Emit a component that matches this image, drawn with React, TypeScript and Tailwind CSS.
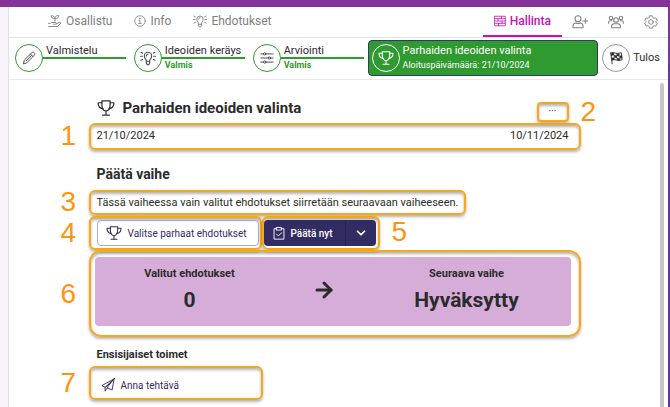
import type { ReactNode } from "react";
import { ArrowRight, ChevronDown } from "lucide-react";

type IconProps = { className?: string };

function Svg({ className, children }: IconProps & { children: ReactNode }) {
  return (
    <svg
      viewBox="0 0 24 24"
      fill="none"
      stroke="currentColor"
      strokeWidth="1.6"
      strokeLinecap="round"
      strokeLinejoin="round"
      aria-hidden="true"
      className={className}
    >
      {children}
    </svg>
  );
}

const Trophy = ({ className }: IconProps) => (
  <Svg className={className}>
    <path d="M6.5 2.5h11v5c0 5-2 8-5.500 8.500C8.500 15.500 6.500 12.500 6.500 7.500z" />
    <path d="M6.500 5H1.500c0 4.500 2.500 7.500 6.500 7.800M17.500 5h5c0 4.500-2.500 7.500-6.500 7.800" />
    <path d="M12 16v5.500M7.500 21.500h9" />
  </Svg>
);

const Bulb = ({ className }: IconProps) => (
  <Svg className={className}>
    <path d="M9.500 17c0-3-3-4-3-8a5.500 5.500 0 0 1 11 0c0 4-3 5-3 8zM9.500 17v3l1.500 2h2l1.500-2v-3M9.500 9c0-1.600 1-2.500 2.500-2.500" />
    <path d="M.8 9.500h2.700M20.500 9.500h2.700M1.500 3.500l2.500 1.300M22.500 3.500L20 4.800M1.500 15.500L4 14.200M22.500 15.500L20 14.200" />
  </Svg>
);

const Info = ({ className }: IconProps) => (
  <Svg className={className}>
    <circle cx="12" cy="12" r="10.500" />
    <path d="M10 10.500h2v6.500M9.500 17h5" />
    <circle cx="11.800" cy="7" r="0.800" fill="currentColor" />
  </Svg>
);

const HandPlant = ({ className }: IconProps) => (
  <Svg className={className}>
    <path d="M12 12.500V7.500C12 4.500 9.500 3 5.500 3c0 3.500 2.500 5 6.500 5M12 8c4 0 6.500-1.500 6.500-5.500-3.500 0-5.500 1-6.300 3" />
    <path d="M1 16h3l2-1.500h6.500c2.500 0 2.500 3 0 3H9.500M14.500 17l5-2.700c2-1 3.300 1 1.800 2.400L16 21.500H1" />
  </Svg>
);

const Board = ({ className }: IconProps) => (
  <Svg className={className}>
    <path d="M1.500 2.500h21v19h-21zM1.500 7.300h21M1.500 12h21M1.500 16.700h21" />
    <path d="M15 2.500v4.800M8 7.300V12M16 12v4.700M9 16.700v4.800" />
  </Svg>
);

const Pencil = ({ className }: IconProps) => (
  <Svg className={className}>
    <path d="M2.500 21.500l1.500-6L17 2.800c1.200-1.200 2.500-1 3.500 0l.7.700c1 1 1 2.300 0 3.500L8.500 20zM14.500 5.200l4.300 4.300" />
    <path d="M15.500 8.500L7 17" />
  </Svg>
);

const Sliders = ({ className }: IconProps) => (
  <Svg className={className}>
    <path d="M1.500 5H6M10 5h12.500M1.500 12H14M18 12h4.500M1.500 19H6M10 19h12.500" />
    <circle cx="8" cy="5" r="2" />
    <circle cx="16" cy="12" r="2" />
    <circle cx="8" cy="19" r="2" />
  </Svg>
);

const RaceFlag = ({ className }: IconProps) => (
  <Svg className={className}>
    <path d="M3 3l2.500 19M3 3.500c6-3 9 3 18-.5l1.500 12c-8 3.500-11-2.500-18 .500" />
    <path
      d="M3.500 4l4.500-1 .6 4L4 8zM13 4.500l4.300.3.600 4-4.500-.3zM8.600 7l4.600 1.200.6 4-4.600-1.200zM18 8.500l4-1 .6 4-4 1.200zM4.600 12l4.400-1 .6 4-4.500.5zM13.800 12.200l4.400.400.6 3.800-4.500-.6z"
      fill="currentColor"
      strokeWidth="0.5"
    />
  </Svg>
);

const UserPlus = ({ className }: IconProps) => (
  <Svg className={className}>
    <circle cx="9" cy="7" r="4.500" />
    <path d="M1.500 20.500v-2.500c0-3 1.800-4.500 4.500-4.500 1.500.8 4.500.8 6 0 2.700 0 4.500 1.500 4.500 4.500v2.500zM20 7v7M16.500 10.500h7" />
  </Svg>
);

const Group = ({ className }: IconProps) => (
  <Svg className={className}>
    <circle cx="12" cy="9" r="3.500" />
    <circle cx="4.500" cy="6" r="2.500" />
    <circle cx="19.500" cy="6" r="2.500" />
    <path d="M5.500 20.500V18c0-2.500 1.500-3.500 4-3.500h5c2.500 0 4 1 4 3.500v2.500zM1 14v-2c0-1.200 1-2 2.500-2H6M23 14v-2c0-1.200-1-2-2.500-2H18" />
  </Svg>
);

const Gear = ({ className }: IconProps) => (
  <Svg className={className}>
    <path d="M9.500 1.500h5l.8 3 2 1.200 3-.8 2.400 4.200-2.200 2.200v1.400l2.200 2.200-2.400 4.200-3-.8-2 1.200-.8 3h-5l-.8-3-2-1.200-3 .8-2.400-4.200 2.200-2.200v-1.400L1.300 9.100l2.400-4.200 3 .8 2-1.200z" />
    <circle cx="12" cy="12" r="4" />
  </Svg>
);

const ClipboardCheck = ({ className }: IconProps) => (
  <Svg className={className}>
    <path d="M8 4.500H3.500v18h17v-18H16M8 2.500h8V7H8zM8 14l3 3 5.500-5.500" />
  </Svg>
);

const PaperPlane = ({ className }: IconProps) => (
  <Svg className={className}>
    <path d="M22.500 1.500L1.500 13l5.500 3zM22.500 1.500L19 20.500 11 17zM22.500 1.500L7 16v6.500l4-5.500" />
  </Svg>
);

function Tab({ icon, label, active }: { icon: ReactNode; label: string; active?: boolean }) {
  return (
    <a
      href="#"
      className={
        active
          ? "flex items-center gap-1 px-[11px] border-b-2 border-[#c410b8] text-[#c410b8] font-medium"
          : "flex items-center gap-1 px-[11px] border-b-2 border-transparent text-[#808080]"
      }
    >
      {icon}
      {label}
    </a>
  );
}

function Step({ icon, label, done }: { icon: ReactNode; label: string; done?: boolean }) {
  return (
    <li className="flex items-center">
      <span className="size-7 shrink-0 rounded-full border border-[#2f9a2f] flex items-center justify-center text-[#444]">
        {icon}
      </span>
      <div className="flex-1 h-7">
        <div className="h-[15px] pl-[3px] border-b-2 border-[#2f9a2f] text-[11px] leading-[13px] whitespace-nowrap">
          {label}
        </div>
        {done && <div className="pl-[3px] text-[9px] leading-3 font-bold text-[#2f9a2f]">Valmis</div>}
      </div>
    </li>
  );
}

// numbered marker that sits beside a framed area
function Marker({ n }: { n: number }) {
  return (
    <span className="w-7 shrink-0 text-[28px] leading-7 text-[#ff9310] font-['Liberation_Sans',sans-serif]">
      {n}
    </span>
  );
}

function Frame({ className, children }: { className: string; children: ReactNode }) {
  return (
    <div
      className={`border-2 border-[#f5a81c] shadow-[0_2px_3px_rgba(0,0,0,0.3),inset_0_2px_3px_rgba(0,0,0,0.3)] ${className}`}
    >
      {children}
    </div>
  );
}

export default function App() {
  return (
    <div className="min-h-screen flex flex-col bg-white text-[#2b2b2b] font-[Roboto,sans-serif]">
      <div className="h-[7px] bg-[#863399]" />
      <div className="flex-1 flex">
        <div className="w-[9px] shrink-0 bg-[#f8f3fa] border-r border-[#e2dde6]" />
        <div className="flex-1 min-w-0 flex flex-col">
          {/* tabs */}
          <nav className="h-[31px] flex pl-7 border-b border-[#e2e2e2] text-xs">
            <Tab icon={<HandPlant className="size-3.5" />} label="Osallistu" />
            <Tab icon={<Info className="size-3" />} label="Info" />
            <Tab icon={<Bulb className="size-3.5" />} label="Ehdotukset" />
            <div className="ml-auto flex pr-2.5">
              <Tab icon={<Board className="size-3" />} label="Hallinta" active />
              <div className="flex items-center gap-5 pl-2.5 text-[#808080]">
                <a href="#" aria-label="Kutsu">
                  <UserPlus className="size-4" />
                </a>
                <a href="#" aria-label="Osallistujat">
                  <Group className="size-4" />
                </a>
                <a href="#" aria-label="Asetukset">
                  <Gear className="size-3.5" />
                </a>
              </div>
            </div>
          </nav>

          {/* phases */}
          <ol className="grid grid-cols-[111fr_111fr_111fr_223fr_auto] gap-x-2 items-center h-[42px] pl-1.5 pr-2 pb-1 pt-0.5 border-b border-[#e8e8e8]">
            <Step icon={<Pencil className="size-3.5" />} label="Valmistelu" />
            <Step icon={<Bulb className="size-4" />} label="Ideoiden keräys" done />
            <Step icon={<Sliders className="size-3.5" />} label="Arviointi" done />
            <li className="h-9 -mx-1 px-[3px] flex items-center gap-[3px] rounded-sm border border-[#2f3b66] bg-[#2f9a2f] text-white">
              <span className="size-7 shrink-0 rounded-full border border-white flex items-center justify-center">
                <Trophy className="size-4" />
              </span>
              <div className="whitespace-nowrap">
                <div className="text-[11px] leading-[14px]">Parhaiden ideoiden valinta</div>
                <div className="text-[9px] leading-[14px]">Aloituspäivämäärä: 21/10/2024</div>
              </div>
            </li>
            <li className="flex items-center gap-[3px] text-[11px]">
              <span className="size-7 shrink-0 rounded-full border border-[#999] flex items-center justify-center">
                <RaceFlag className="size-3.5" />
              </span>
              Tulos
            </li>
          </ol>

          <div className="flex-1 flex">
            <main className="flex-1 min-w-0">
              <div className="max-w-[548px] mx-auto pt-[18px]">
                <div className="flex items-start pl-9">
                  <h1 className="flex items-center gap-2 text-[15px] leading-5 font-bold">
                    <Trophy className="size-[18px]" />
                    Parhaiden ideoiden valinta
                  </h1>
                  <div className="ml-auto pt-1 flex items-center gap-3 h-6">
                    <Frame className="rounded-sm">
                      <button className="block w-7 h-4 text-[10px] leading-4" aria-label="Lisää">
                        ···
                      </button>
                    </Frame>
                    <Marker n={2} />
                  </div>
                </div>

                <div className="flex items-center pr-7">
                  <Marker n={1} />
                  <Frame className="flex-1 flex justify-between rounded-md pl-1.5 pr-2.5 pt-0.5 pb-[3px] text-[11px] leading-[18px]">
                    <span>21/10/2024</span>
                    <span>10/11/2024</span>
                  </Frame>
                </div>

                <h2 className="pl-9 mt-3.5 mb-1 text-sm leading-5 font-bold">Päätä vaihe</h2>

                <div className="flex items-center h-7">
                  <Marker n={3} />
                  <Frame className="rounded-md px-1.5 text-[11px] leading-[21px] whitespace-nowrap">
                    Tässä vaiheessa vain valitut ehdotukset siirretään seuraavaan vaiheeseen.
                  </Frame>
                </div>

                <div className="flex items-center">
                  <Marker n={4} />
                  <Frame className="rounded-md pl-1.5 pr-px py-0.5">
                    <button className="h-[26px] pl-2 pr-3 flex items-center gap-1.5 rounded-sm border border-[#a9a9c4] text-[10px] text-[#312c62] whitespace-nowrap">
                      <Trophy className="size-4" />
                      Valitse parhaat ehdotukset
                    </button>
                  </Frame>
                  <Frame className="rounded-md pr-0.5 py-0.5">
                    <div className="h-[26px] flex rounded-sm bg-[#312c62] text-white text-[10px] font-medium">
                      <button className="flex items-center gap-1 pl-2 pr-3 border-r border-[#28244f] whitespace-nowrap">
                        <ClipboardCheck className="size-3.5" />
                        Päätä nyt
                      </button>
                      <button className="px-2" aria-label="Lisää vaihtoehtoja">
                        <ChevronDown className="size-3.5" strokeWidth={3} />
                      </button>
                    </div>
                  </Frame>
                  <div className="pl-3">
                    <Marker n={5} />
                  </div>
                </div>

                <div className="flex items-center pr-7">
                  <Marker n={6} />
                  <Frame className="flex-1 rounded-xl pt-[5px] pl-1 pr-2 pb-[9px]">
                    <div className="grid grid-cols-[190fr_78fr_208fr] justify-items-center items-center h-[69px] pb-1 rounded-sm bg-[#d6add8] text-center font-bold">
                      <div>
                        <div className="text-[11px] leading-4">Valitut ehdotukset</div>
                        <div className="pt-1 text-[21px] leading-7">0</div>
                      </div>
                      <ArrowRight className="size-6" strokeWidth={3} />
                      <div>
                        <div className="text-[11px] leading-4">Seuraava vaihe</div>
                        <div className="pt-1 text-[21px] leading-7">Hyväksytty</div>
                      </div>
                    </div>
                  </Frame>
                </div>

                <h3 className="pl-9 mt-2.5 mb-[3px] text-[11px] leading-4 font-bold">Ensisijaiset toimet</h3>

                <div className="flex items-center">
                  <Marker n={7} />
                  <Frame className="w-[174px] rounded-md">
                    <button className="h-[30px] pl-2.5 pt-1 flex items-center gap-1.5 text-[10px] text-[#312c62]">
                      <PaperPlane className="size-3.5" />
                      Anna tehtävä
                    </button>
                  </Frame>
                </div>
              </div>
            </main>
            <div className="w-1 mt-[3px] mr-1 shrink-0 rounded-t-sm bg-[#c6c6c6]" />
          </div>
        </div>
        <div className="w-0.5 shrink-0 bg-linear-to-b from-[#863399] to-[#6236a8] to-20%" />
      </div>
    </div>
  );
}
